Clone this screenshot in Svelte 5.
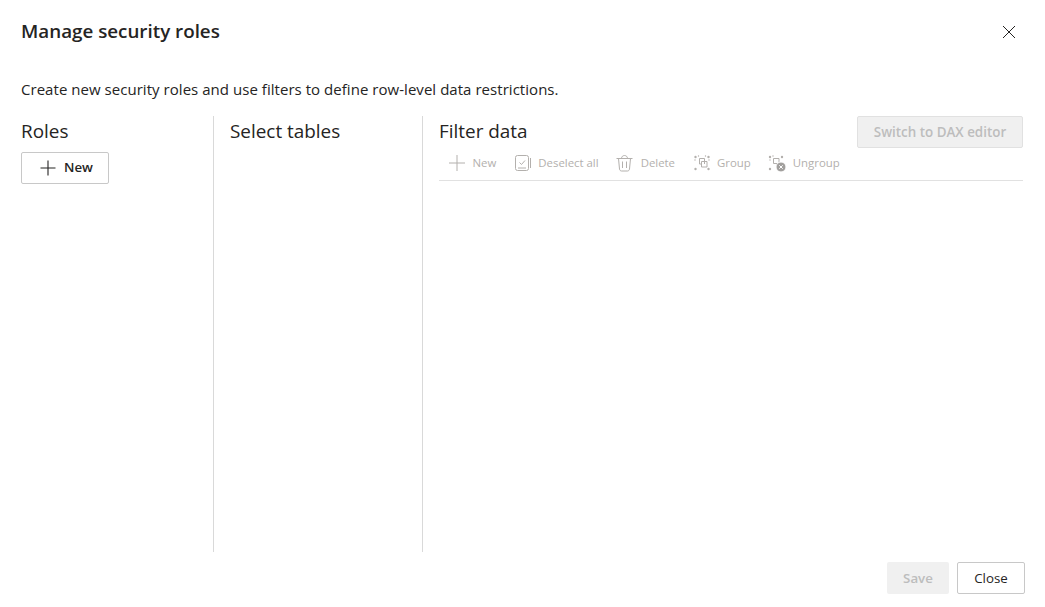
<script>
  const tools = ["New", "Deselect all", "Delete", "Group", "Ungroup"];
</script>

<div class="dialog">
  <header class="head">
    <h1>Manage security roles</h1>
    <button class="x" aria-label="Close">
      <svg width="16" height="16" viewBox="0 0 16 16"><path d="M2 2l12 12M14 2L2 14" stroke="#252423" stroke-width="1" fill="none"/></svg>
    </button>
  </header>

  <p class="desc">Create new security roles and use filters to define row-level data restrictions.</p>

  <div class="cols">
    <section class="col roles">
      <h2>Roles</h2>
      <button class="btn new">
        <svg width="16" height="16" viewBox="0 0 16 16"><path d="M8 .5v15M.5 8h15" stroke="#252423" stroke-width="1.1" fill="none"/></svg>
        New
      </button>
    </section>

    <section class="col tables">
      <h2>Select tables</h2>
    </section>

    <section class="col filter">
      <div class="filter-top">
        <h2>Filter data</h2>
        <button class="dax" disabled>Switch to DAX editor</button>
      </div>
      <div class="toolbar">
        {#each tools as t}
          <span class="tool">
            {#if t === "New"}
              <svg width="18" height="18" viewBox="0 0 18 18"><path d="M9 1v16M1 9h16" /></svg>
            {:else if t === "Deselect all"}
              <svg width="18" height="18" viewBox="0 0 18 18"><rect x="1.500" y="1.500" width="13" height="15" rx="2"/><path d="M4 14h8M5.500 8.500l2 2 3.500-4M16.500 4v10"/></svg>
            {:else if t === "Delete"}
              <svg width="18" height="18" viewBox="0 0 18 18"><path d="M.5 4.500h16M5.500 4.500C5.500 2.500 7 1.500 8.500 1.500s3 1 3 3M2.500 4.500l1 10.500c.1 1.200 1 2 2 2h6c1 0 1.900-.8 2-2l1-10.500M6.500 7.500v6.500M10.500 7.500v6.500"/></svg>
            {:else if t === "Group"}
              <svg width="18" height="18" viewBox="0 0 18 18"><path d="M6.500 4.500h5v5.500M6.500 4.500v5.500h2M11.500 7.500h2.500v5.500h-5.500v-5.500h3"/><circle cx="2.500" cy="3" r="1.200" class="dot"/><circle cx="15.500" cy="3" r="1.200" class="dot"/><circle cx="2.500" cy="15" r="1.200" class="dot"/><circle cx="15.500" cy="15" r="1.200" class="dot"/><circle cx="5.500" cy="2" r=".7" class="dot"/><circle cx="2" cy="6" r=".7" class="dot"/><circle cx="12.500" cy="2" r=".7" class="dot"/><circle cx="16" cy="6" r=".7" class="dot"/></svg>
            {:else}
              <svg width="18" height="18" viewBox="0 0 18 18"><path d="M5.500 4.500h5.500v5h-5.500zM8.500 9.500v3h2"/><circle cx="2" cy="3" r="1.200" class="dot"/><circle cx="14" cy="3" r="1.200" class="dot"/><circle cx="2" cy="15" r="1.200" class="dot"/><circle cx="5" cy="2" r=".7" class="dot"/><circle cx="2" cy="6" r=".7" class="dot"/><circle cx="13" cy="13" r="5" class="badge"/><path d="M11.300 11.300l3.400 3.400M14.700 11.300l-3.400 3.400" class="badge-x"/></svg>
            {/if}
            {t}
          </span>
        {/each}
      </div>
    </section>
  </div>

  <footer class="foot">
    <button class="save" disabled>Save</button>
    <button class="btn close">Close</button>
  </footer>
</div>

<style>
  :global(body) {
    background: #fff;
    font-family: "Open Sans", "Noto Sans", sans-serif;
    color: #252423;
  }

  .dialog {
    width: 1045px;
    height: 607px;
    box-sizing: border-box;
    padding: 0 20px 13px 21px;
    display: flex;
    flex-direction: column;
  }

  .head {
    display: flex;
    justify-content: space-between;
    align-items: center;
    height: 62px;
  }

  h1 {
    margin: 0;
    font-size: 18.800px;
    font-weight: 600;
  }

  .x {
    border: 0;
    background: none;
    padding: 0;
    margin: 2px 8px 0 0;
    width: 16px;
    height: 16px;
  }

  .desc {
    margin: 0;
    padding-top: 17px;
    font-size: 15px;
    letter-spacing: .04px;
    line-height: 20px;
  }

  .cols {
    flex: 1;
    display: flex;
    margin-top: 17px;
  }

  .col {
    box-sizing: border-box;
  }

  h2 {
    margin: 0;
    font-size: 18.900px;
    font-weight: 400;
    line-height: 30px;
  }

  .roles {
    width: 193px;
    border-right: 1px solid #d9d9d9;
  }

  .tables {
    width: 209px;
    padding-left: 16px;
    border-right: 1px solid #d9d9d9;
  }

  .filter {
    flex: 1;
    padding-left: 16px;
    padding-right: 2px;
  }

  .filter-top {
    display: flex;
    justify-content: space-between;
    align-items: flex-start;
  }

  button {
    font-family: inherit;
  }

  .btn {
    background: #fff;
    border: 1px solid #c8c8c8;
    border-radius: 2px;
    color: #252423;
    font-weight: 600;
    font-size: 13.300px;
  }

  .new {
    display: flex;
    align-items: center;
    gap: 8px;
    width: 88px;
    height: 32px;
    padding: 0 0 2px 18px;
    margin-top: 6px;
  }

  .new svg {
    margin-top: 2px;
  }

  .dax {
    width: 166px;
    height: 32px;
    background: #f0f0f0;
    border: 1px solid #e1e1e1;
    border-radius: 2px;
    color: #bdbdbd;
    font-weight: 600;
    font-size: 13.400px;
    padding: 0;
  }

  .toolbar {
    display: flex;
    align-items: center;
    gap: 17.500px;
    height: 32px;
    box-sizing: border-box;
    margin-top: 1px;
    padding: 0 0 4px 9px;
    border-bottom: 1px solid #e1e1e1;
  }

  .tool {
    display: flex;
    align-items: center;
    gap: 6.500px;
    color: #b3b0ad;
    font-size: 11.400px;
  }

  .tool svg {
    fill: none;
    stroke: #b3b0ad;
    stroke-width: 1;
    flex: none;
  }

  .tool .dot {
    fill: #b3b0ad;
    stroke: none;
  }

  .tool .badge {
    fill: #a19f9d;
    stroke: #fff;
  }

  .tool .badge-x {
    stroke: #fff;
  }

  .foot {
    display: flex;
    justify-content: flex-end;
    gap: 8px;
    padding-top: 10px;
  }

  .save {
    width: 62px;
    height: 32px;
    background: #f0f0f0;
    border: 0;
    border-radius: 2px;
    color: #bdbdbd;
    font-weight: 600;
    font-size: 13.300px;
  }

  .close {
    width: 68px;
    height: 32px;
    font-weight: 400;
  }
</style>
